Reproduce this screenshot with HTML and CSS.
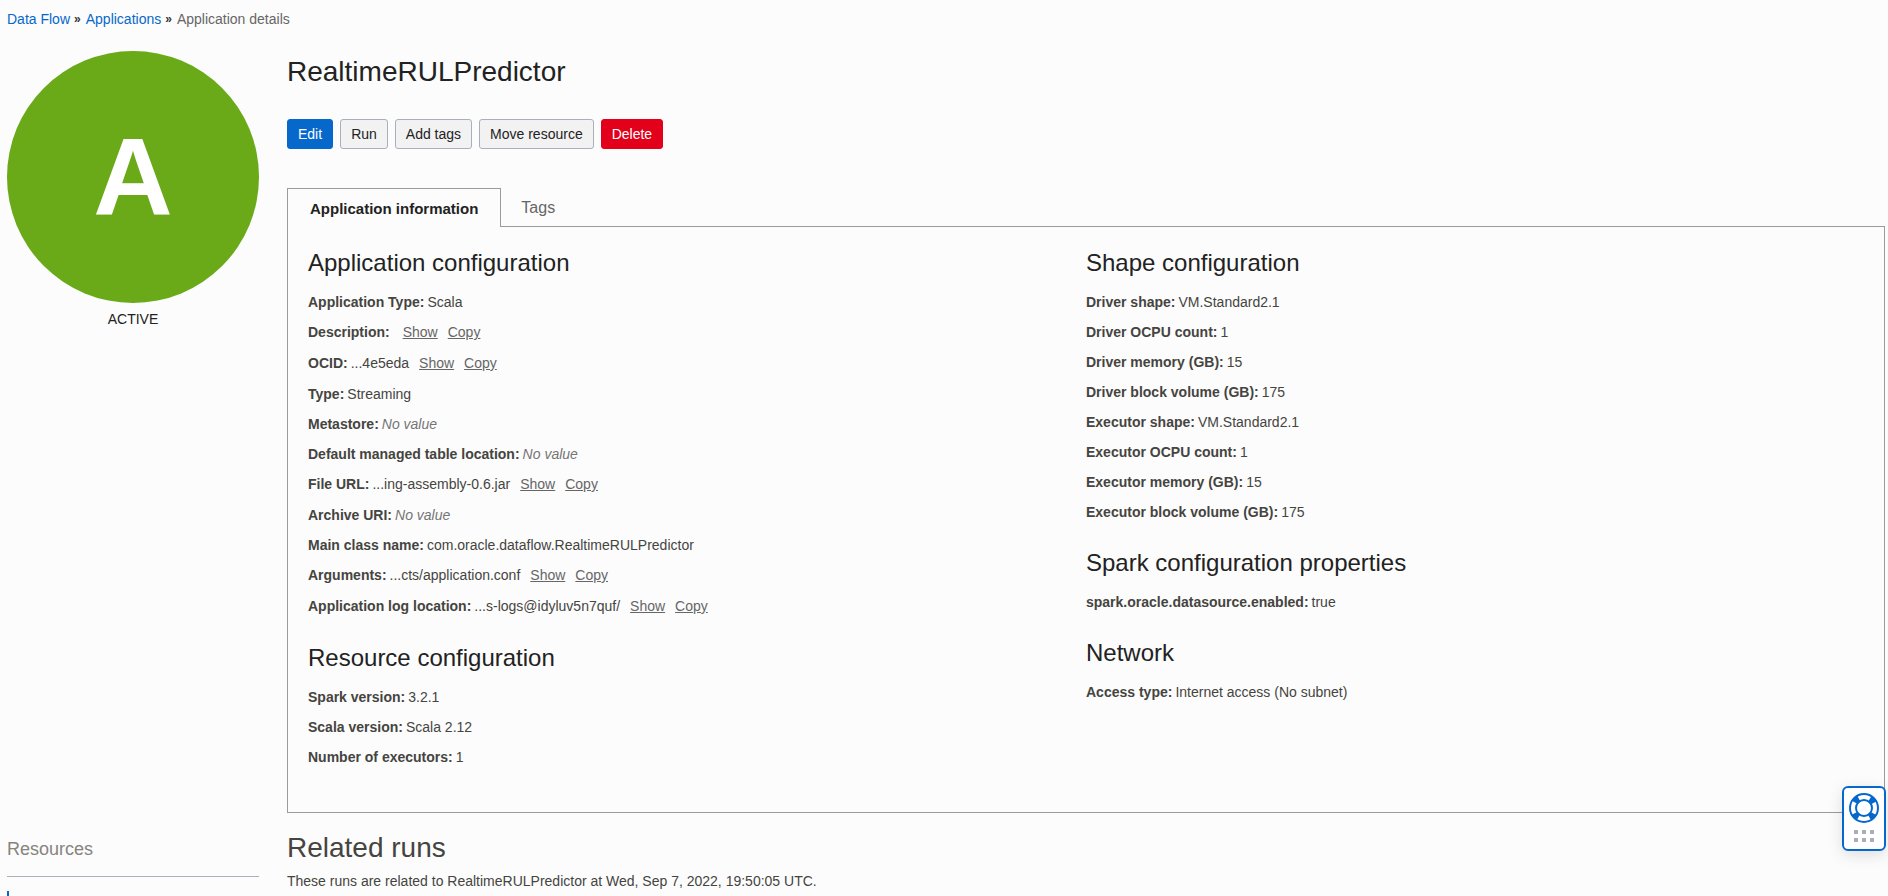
FILE: index.html
```html
<!DOCTYPE html>
<html lang="en">
<head>
<meta charset="utf-8">
<title>Application details</title>
<link rel="stylesheet" href="styles.css">
</head>
<body>
<nav class="breadcrumb" aria-label="Breadcrumb">
  <a href="#">Data Flow</a><span class="sep">»</span><a href="#">Applications</a><span class="sep">»</span><span class="current">Application details</span>
</nav>
<div class="layout">
  <aside class="side">
    <div class="badge">A</div>
    <div class="status">ACTIVE</div>
  </aside>
  <main class="main">
    <h1 class="title">RealtimeRULPredictor</h1>
    <div class="actions">
      <button class="btn primary" type="button">Edit</button>
      <button class="btn" type="button">Run</button>
      <button class="btn" type="button">Add tags</button>
      <button class="btn" type="button">Move resource</button>
      <button class="btn danger" type="button">Delete</button>
    </div>
    <div class="tabs" role="tablist">
      <button class="tab active" type="button" role="tab" aria-selected="true">Application information</button>
      <button class="tab" type="button" role="tab" aria-selected="false">Tags</button>
    </div>
    <div class="panel" role="tabpanel">
      <div class="col">
        <section class="group">
          <h2>Application configuration</h2>
          <dl>
            <div class="row"><dt>Application Type:</dt><dd>Scala</dd></div>
            <div class="row linked"><dt>Description:</dt><dd></dd><a href="#">Show</a><a href="#">Copy</a></div>
            <div class="row linked"><dt>OCID:</dt><dd>...4e5eda</dd><a href="#">Show</a><a href="#">Copy</a></div>
            <div class="row"><dt>Type:</dt><dd>Streaming</dd></div>
            <div class="row"><dt>Metastore:</dt><dd class="none">No value</dd></div>
            <div class="row"><dt>Default managed table location:</dt><dd class="none">No value</dd></div>
            <div class="row linked"><dt>File URL:</dt><dd>...ing-assembly-0.6.jar</dd><a href="#">Show</a><a href="#">Copy</a></div>
            <div class="row"><dt>Archive URI:</dt><dd class="none">No value</dd></div>
            <div class="row"><dt>Main class name:</dt><dd>com.oracle.dataflow.RealtimeRULPredictor</dd></div>
            <div class="row linked"><dt>Arguments:</dt><dd>...cts/application.conf</dd><a href="#">Show</a><a href="#">Copy</a></div>
            <div class="row linked"><dt>Application log location:</dt><dd>...s-logs@idyluv5n7quf/</dd><a href="#">Show</a><a href="#">Copy</a></div>
          </dl>
        </section>
        <section class="group">
          <h2>Resource configuration</h2>
          <dl>
            <div class="row"><dt>Spark version:</dt><dd>3.2.1</dd></div>
            <div class="row"><dt>Scala version:</dt><dd>Scala 2.12</dd></div>
            <div class="row"><dt>Number of executors:</dt><dd>1</dd></div>
          </dl>
        </section>
      </div>
      <div class="col">
        <section class="group">
          <h2>Shape configuration</h2>
          <dl>
            <div class="row"><dt>Driver shape:</dt><dd>VM.Standard2.1</dd></div>
            <div class="row"><dt>Driver OCPU count:</dt><dd>1</dd></div>
            <div class="row"><dt>Driver memory (GB):</dt><dd>15</dd></div>
            <div class="row"><dt>Driver block volume (GB):</dt><dd>175</dd></div>
            <div class="row"><dt>Executor shape:</dt><dd>VM.Standard2.1</dd></div>
            <div class="row"><dt>Executor OCPU count:</dt><dd>1</dd></div>
            <div class="row"><dt>Executor memory (GB):</dt><dd>15</dd></div>
            <div class="row"><dt>Executor block volume (GB):</dt><dd>175</dd></div>
          </dl>
        </section>
        <section class="group">
          <h2>Spark configuration properties</h2>
          <dl>
            <div class="row"><dt>spark.oracle.datasource.enabled:</dt><dd>true</dd></div>
          </dl>
        </section>
        <section class="group">
          <h2>Network</h2>
          <dl>
            <div class="row"><dt>Access type:</dt><dd>Internet access (No subnet)</dd></div>
          </dl>
        </section>
      </div>
    </div>
  </main>
</div>
<div class="layout lower">
  <aside class="side">
    <h2 class="resources">Resources</h2>
    <div class="marker"></div>
  </aside>
  <section class="main">
    <h2 class="related">Related runs</h2>
    <p class="note">These runs are related to RealtimeRULPredictor at Wed, Sep 7, 2022, 19:50:05 UTC.</p>
  </section>
</div>
<button class="help" type="button" aria-label="Help">
  <svg width="30" height="30" viewBox="0 0 30 30" fill="none" aria-hidden="true">
    <circle cx="15" cy="15" r="11" stroke="#0668cb" stroke-width="7" stroke-dasharray="5.6 11.679" stroke-dashoffset="-5.84"/>
    <circle cx="15" cy="15" r="14" stroke="#0668cb" stroke-width="2"/>
    <circle cx="15" cy="15" r="8" stroke="#0668cb" stroke-width="2"/>
  </svg>
  <svg width="20" height="12" viewBox="0 0 20 12" fill="#a9aeb7" aria-hidden="true">
    <path d="M0 0h4v4H0zM8 0h4v4H8zM16 0h4v4h-4zM0 8h4v4H0zM8 8h4v4H8zM16 8h4v4h-4z"/>
  </svg>
</button>
</body>
</html>
```
FILE: styles.css
```css
* { box-sizing: border-box; }

html { overflow: hidden; }

body {
  margin: 0;
  height: 100vh;
  overflow: hidden;
  padding: 9px 3px 0 7px;
  background: #fcfcfc;
  color: #45443f;
  font: 14px/20px "Liberation Sans", Arial, sans-serif;
}

h1, h2, p, dl, dd { margin: 0; font-weight: 400; }

button { font: inherit; }

.breadcrumb { display: flex; color: #666; }
.breadcrumb a { color: #0668cb; text-decoration: none; }
.sep { padding: 0 5px 0 4px; color: #333; font-size: 12px; font-weight: 700; }

.layout {
  display: grid;
  grid-template-columns: 252px minmax(0, 1fr);
  column-gap: 28px;
  margin-top: 22px;
}

.badge {
  display: flex;
  align-items: center;
  justify-content: center;
  width: 100%;
  aspect-ratio: 1;
  padding-bottom: 2px;
  border-radius: 50%;
  background: #6aaa18;
  color: #fff;
  font-size: 110px;
  font-weight: 700;
  line-height: 1;
}

.status { margin-top: 6px; color: #222; text-align: center; }

.title { padding-top: 1px; color: #222; font-size: 28px; line-height: 40px; }

.actions { display: flex; gap: 7px; margin-top: 27px; }

.btn {
  height: 30px;
  padding: 0 10px;
  border: 1px solid #a9b0bb;
  border-radius: 3px;
  background: #f2f2f2;
  color: #222;
}
.btn.primary { border-color: #0668cb; background: #0668cb; color: #fff; }
.btn.danger { border-color: #e2001a; background: #e2001a; color: #fff; }

.tabs { display: flex; margin-top: 39px; }

.tab {
  height: 38px;
  padding: 2px 20px 0;
  border: 0;
  background: none;
  color: #666;
  font-size: 16px;
}
.tab.active {
  position: relative;
  height: 39px;
  margin-bottom: -1px;
  padding: 2px 22px 0;
  border: 1px solid #9b9b9b;
  border-bottom: 0;
  background: #fcfcfc;
  color: #222;
  font-size: 15px;
  font-weight: 700;
}

.panel {
  display: grid;
  grid-template-columns: 1fr 1fr;
  padding: 21px 20px 40px;
  border: 1px solid #9b9b9b;
}

.group + .group { margin-top: 21px; }
.group h2 { margin-bottom: 9px; color: #222; font-size: 24px; line-height: 30px; }

.row { display: flex; line-height: 30px; }
.row.linked { line-height: 31px; }
.row dt { margin-right: 3px; font-weight: 700; }
.row a { margin-left: 10px; color: #666; text-decoration: underline; }
.none { color: #757575; font-style: italic; }

.lower { margin-top: 18px; }

.resources {
  padding: 6px 0 14px;
  border-bottom: 1px solid #a9b0bb;
  color: #86847e;
  font-size: 18px;
  line-height: 25px;
}
.marker { height: 30px; margin-top: 14px; border-left: 2px solid #0668cb; }

.related { font-size: 28px; line-height: 34px; }
.note { margin-top: 6px; }

.help {
  position: fixed;
  right: 2px;
  bottom: 45px;
  display: flex;
  flex-direction: column;
  align-items: center;
  gap: 7px;
  width: 44px;
  height: 65px;
  padding: 5px 0 0;
  border: 2px solid #0668cb;
  border-radius: 6px;
  background: #fff;
  box-shadow: 0 4px 16px rgba(0, 0, 0, 0.12);
}
.help svg { display: block; }
```
